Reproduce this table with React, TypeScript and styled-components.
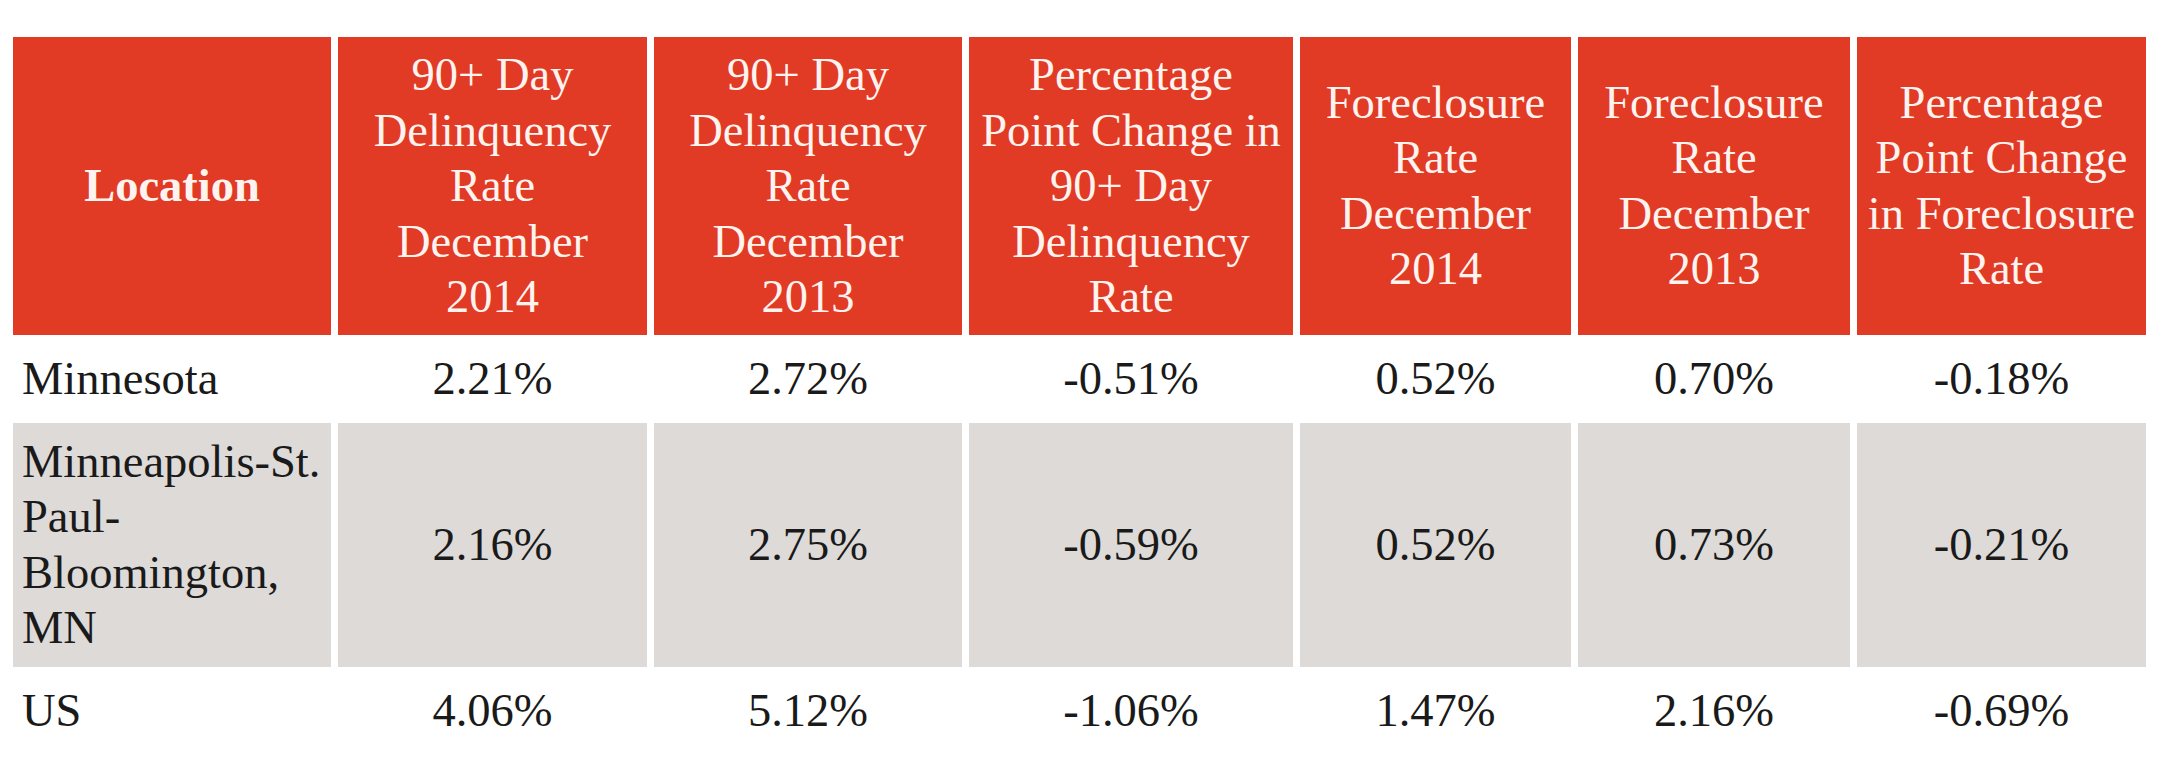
import React from "react";
import styled, { createGlobalStyle } from "styled-components";

const GlobalStyle = createGlobalStyle`
  html, body {
    margin: 0;
    padding: 0;
    background: #ffffff;
  }
  body {
    font-family: "Liberation Serif", "Times New Roman", Times, "DejaVu Serif", serif;
  }
`;

const Page = styled.div`
  width: 2160px;
  height: 782px;
  box-sizing: border-box;
  padding: 37px 0 0 13px;
  background: #ffffff;
`;

const Grid = styled.div`
  display: grid;
  grid-template-columns: 318px 309px 308px 324px 271px 272px 289px;
  column-gap: 7px;
  row-gap: 5px;
  font-family: "Liberation Serif", "Times New Roman", Times, "DejaVu Serif", serif;
  font-size: 46.5px;
  line-height: 55.5px;
`;

const HeadCell = styled.div<{ $bold?: boolean }>`
  background: #e13a25;
  color: #fff3ef;
  display: flex;
  flex-direction: column;
  align-items: center;
  justify-content: center;
  text-align: center;
  padding: 10px 4px;
  min-height: 297px;
  box-sizing: border-box;
  font-weight: ${(p) => (p.$bold ? 700 : 400)};
`;

const Line = styled.span`
  display: block;
  white-space: nowrap;
`;

const BodyCell = styled.div<{ $shade?: boolean; $left?: boolean }>`
  background: ${(p) => (p.$shade ? "#dddad8" : "#ffffff")};
  color: #1a1a1a;
  display: flex;
  flex-direction: column;
  justify-content: center;
  align-items: ${(p) => (p.$left ? "flex-start" : "center")};
  text-align: ${(p) => (p.$left ? "left" : "center")};
  padding: 11px 4px 11px ${(p) => (p.$left ? "9px" : "4px")};
  box-sizing: border-box;
  min-height: 78px;
`;

const headers: { lines: string[]; bold?: boolean }[] = [
  { lines: ["Location"], bold: true },
  { lines: ["90+ Day", "Delinquency", "Rate", "December", "2014"] },
  { lines: ["90+ Day", "Delinquency", "Rate", "December", "2013"] },
  { lines: ["Percentage", "Point Change in", "90+ Day", "Delinquency", "Rate"] },
  { lines: ["Foreclosure", "Rate", "December", "2014"] },
  { lines: ["Foreclosure", "Rate", "December", "2013"] },
  { lines: ["Percentage", "Point Change", "in Foreclosure", "Rate"] },
];

const rows: { location: string[]; values: string[]; shade?: boolean }[] = [
  {
    location: ["Minnesota"],
    values: ["2.21%", "2.72%", "-0.51%", "0.52%", "0.70%", "-0.18%"],
  },
  {
    location: ["Minneapolis-St.", "Paul-", "Bloomington,", "MN"],
    values: ["2.16%", "2.75%", "-0.59%", "0.52%", "0.73%", "-0.21%"],
    shade: true,
  },
  {
    location: ["US"],
    values: ["4.06%", "5.12%", "-1.06%", "1.47%", "2.16%", "-0.69%"],
  },
];

export default function App() {
  return (
    <>
      <GlobalStyle />
      <Page>
        <Grid>
          {headers.map((h, i) => (
            <HeadCell key={`h${i}`} $bold={h.bold}>
              {h.lines.map((l, j) => (
                <Line key={j}>{l}</Line>
              ))}
            </HeadCell>
          ))}
          {rows.map((r, ri) => (
            <React.Fragment key={`r${ri}`}>
              <BodyCell $shade={r.shade} $left>
                {r.location.map((l, j) => (
                  <Line key={j}>{l}</Line>
                ))}
              </BodyCell>
              {r.values.map((v, vi) => (
                <BodyCell key={vi} $shade={r.shade}>
                  {v}
                </BodyCell>
              ))}
            </React.Fragment>
          ))}
        </Grid>
      </Page>
    </>
  );
}
